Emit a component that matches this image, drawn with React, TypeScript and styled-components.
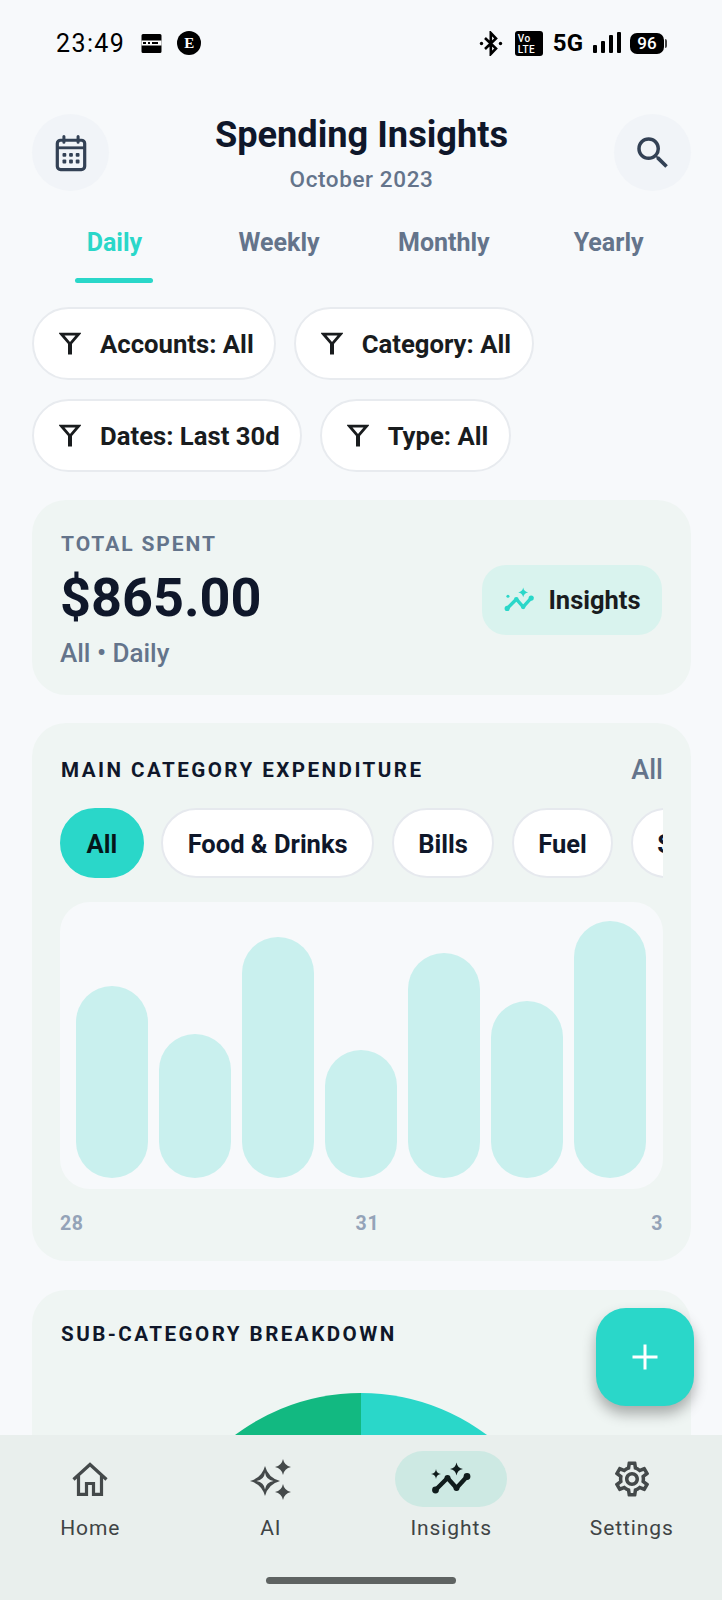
import React from "react";
import styled, { createGlobalStyle } from "styled-components";
import { MdSearch, MdOutlineSettings } from "react-icons/md";

const TEAL = "#2ad7c9";
const NAVY = "#0f172a";
const SLATE = "#64748b";

const Global = createGlobalStyle`
  html, body { margin: 0; padding: 0; background: #f7f9fb; }
  * { box-sizing: border-box; }
  body { font-family: Roboto, "Liberation Sans", sans-serif; }
`;

const Screen = styled.div`
  position: relative;
  width: 722px;
  height: 1600px;
  background: #f7f9fb;
  display: flex;
  flex-direction: column;
  overflow: hidden;
`;

const StatusBar = styled.div`
  height: 84px;
  flex: none;
  padding: 2px 55px 0 56px;
  display: flex;
  align-items: center;
  color: #000;
`;

const Time = styled.span`
  font-size: 25px;
  font-weight: 400;
  letter-spacing: 1.4px;
  margin-right: 16px;
`;

const EBadge = styled.span`
  width: 24px;
  height: 24px;
  margin-left: 15px;
  border-radius: 50%;
  background: #000;
  color: #fff;
  font: 700 15px "Liberation Serif", serif;
  display: flex;
  align-items: center;
  justify-content: center;
`;

const StatusRight = styled.div`
  margin-left: auto;
  display: flex;
  align-items: center;
`;

const VoLte = styled.span`
  width: 28px;
  height: 25px;
  margin-left: 12px;
  border-radius: 3px;
  background: #000;
  color: #fff;
  font-size: 10px;
  font-weight: 500;
  line-height: 11px;
  padding: 2px 0 0 3px;
  letter-spacing: 0.4px;
`;

const FiveG = styled.span`
  font-size: 24px;
  font-weight: 700;
  margin-left: 10px;
  margin-right: 10px;
`;

const Battery = styled.span`
  display: flex;
  align-items: center;
  margin-left: 9px;
  &::after {
    content: "";
    width: 2px;
    height: 9px;
    margin-left: 1px;
    background: #444;
    border-radius: 0 2px 2px 0;
  }
`;

const BatteryBody = styled.span`
  width: 34px;
  height: 21px;
  border-radius: 7px;
  background: #000;
  color: #fff;
  font-size: 17px;
  font-weight: 500;
  display: flex;
  align-items: center;
  justify-content: center;
`;

const Scroll = styled.div`
  flex: 1;
  min-height: 0;
  overflow: hidden;
  padding: 30px 31px 0 32px;
`;

const Header = styled.header`
  display: flex;
  align-items: center;
  justify-content: space-between;
`;

const RoundButton = styled.div`
  width: 77px;
  height: 77px;
  border-radius: 50%;
  background: #f1f4f8;
  color: #334155;
  display: flex;
  align-items: center;
  justify-content: center;
`;

const TitleBlock = styled.div`
  text-align: center;
`;

const Title = styled.h1`
  margin: 0;
  font-size: 36.2px;
  line-height: 42px;
  font-weight: 700;
  color: ${NAVY};
`;

const Subtitle = styled.div`
  margin-top: 12px;
  font-size: 22.5px;
  line-height: 23px;
  font-weight: 500;
  letter-spacing: 0.6px;
  color: ${SLATE};
`;

const Tabs = styled.nav`
  display: grid;
  grid-template-columns: repeat(4, 1fr);
  margin-top: 22px;
`;

const Tab = styled.div<{ $active?: boolean }>`
  height: 70px;
  padding-top: 14px;
  font-size: 25px;
  line-height: 32px;
  font-weight: 700;
  text-align: center;
  color: ${(p) => (p.$active ? TEAL : SLATE)};
  position: relative;
  &::after {
    content: "";
    display: ${(p) => (p.$active ? "block" : "none")};
    position: absolute;
    left: 43px;
    bottom: 0;
    width: 78px;
    height: 5px;
    border-radius: 3px;
    background: ${TEAL};
  }
`;

const FilterWrap = styled.div`
  display: flex;
  flex-wrap: wrap;
  gap: 19px 17.5px;
  margin-top: 24px;
`;

const FilterChip = styled.div`
  height: 73px;
  padding: 0 20.5px 0 25px;
  display: flex;
  align-items: center;
  gap: 19px;
  background: #fff;
  border: 2px solid #e8ebef;
  border-radius: 37px;
  font-size: 25.7px;
  font-weight: 700;
  color: #191c1e;
`;

const SummaryCard = styled.section`
  margin-top: 28px;
  height: 195px;
  padding: 30px 29px 0 28px;
  background: #eff5f3;
  border-radius: 34px;
  display: flex;
  align-items: flex-start;
  justify-content: space-between;
`;

const Label = styled.div`
  padding-left: 1px;
  font-size: 21px;
  line-height: 28px;
  font-weight: 700;
  letter-spacing: 1.9px;
  color: ${SLATE};
`;

const Amount = styled.div`
  margin-top: 8px;
  font-size: 54px;
  line-height: 64px;
  font-weight: 700;
  color: ${NAVY};
`;

const Meta = styled.div`
  margin-top: 8px;
  font-size: 26px;
  line-height: 30px;
  font-weight: 500;
  color: ${SLATE};
`;

const InsightsButton = styled.div`
  margin-top: 35px;
  width: 180px;
  height: 70px;
  border-radius: 24px;
  background: #d9f3ee;
  display: flex;
  align-items: center;
  justify-content: center;
  gap: 13px;
  font-size: 25.5px;
  font-weight: 700;
  color: #191c1e;
`;

const Card = styled.section`
  margin-top: 28px;
  padding: 30px 28px 0;
  background: #eff5f3;
  border-radius: 34px;
`;

const CardHead = styled.div`
  display: flex;
  align-items: center;
  justify-content: space-between;
  height: 34px;
`;

const CardTitle = styled.h2`
  margin: 0;
  padding-left: 1px;
  font-size: 20.6px;
  font-weight: 700;
  letter-spacing: 2.45px;
  color: ${NAVY};
`;

const CardAction = styled.span`
  font-size: 27px;
  font-weight: 500;
  color: ${SLATE};
`;

const PillRow = styled.div`
  display: flex;
  gap: 17.5px;
  margin-top: 21px;
  overflow: hidden;
`;

const Pill = styled.div<{ $active?: boolean }>`
  flex: none;
  height: 70px;
  padding: 2px 24.5px 0;
  display: flex;
  align-items: center;
  border-radius: 35px;
  font-size: 25.5px;
  font-weight: 700;
  background: ${(p) => (p.$active ? TEAL : "#fff")};
  border: 2px solid ${(p) => (p.$active ? TEAL : "#e6e9ee")};
  color: ${(p) => (p.$active ? "#05161a" : NAVY)};
`;

const ChartPanel = styled.div`
  margin-top: 24px;
  height: 287px;
  padding: 0 16px 11px;
  background: #f7f9fb;
  border-radius: 30px;
  display: flex;
  align-items: flex-end;
  gap: 11px;
`;

const Bar = styled.div`
  width: 72px;
  border-radius: 36px;
  background: #c9f0ee;
`;

const Axis = styled.div`
  display: flex;
  justify-content: space-between;
  margin-top: 24px;
  padding-bottom: 26px;
  font-size: 19.5px;
  line-height: 22px;
  font-weight: 700;
  letter-spacing: 0.6px;
  color: #94a3b8;
`;

const BreakdownCard = styled(Card)`
  margin-top: 29px;
  padding-top: 27px;
  height: 400px;
`;

const PieBox = styled.div`
  display: flex;
  justify-content: center;
  margin-top: 42px;
  padding-right: 2px;
`;

const BottomNav = styled.nav`
  flex: none;
  height: 165px;
  background: #e9efed;
  display: grid;
  grid-template-columns: repeat(4, 1fr);
  padding-top: 16px;
  position: relative;
`;

const NavItem = styled.div`
  display: flex;
  flex-direction: column;
  align-items: center;
  font-size: 21px;
  line-height: 26px;
  letter-spacing: 0.9px;
  font-weight: 400;
  color: #3f4445;
`;

const NavIcon = styled.div<{ $active?: boolean }>`
  width: 112px;
  height: 56px;
  margin-bottom: 8px;
  border-radius: 28px;
  background: ${(p) => (p.$active ? "#cde9e3" : "transparent")};
  display: flex;
  align-items: center;
  justify-content: center;
`;

const HomeBar = styled.div`
  position: absolute;
  left: 266px;
  bottom: 16px;
  width: 190px;
  height: 7px;
  border-radius: 4px;
  background: #5e6362;
`;

const Fab = styled.div`
  position: absolute;
  left: 596px;
  top: 1308px;
  width: 98px;
  height: 98px;
  border-radius: 30px;
  background: ${TEAL};
  box-shadow: 0 8px 14px rgba(0, 0, 0, 0.3);
  display: flex;
  align-items: center;
  justify-content: center;
`;

const Sparkle = ({ x, y, r, w = 0.3 }: { x: number; y: number; r: number; w?: number }) => {
  const k = r * w;
  return (
    <path
      d={`M${x} ${y - r}Q${x + k * 0.3} ${y - k * 0.3} ${x + r} ${y}Q${x + k * 0.3} ${y + k * 0.3} ${x} ${y + r}Q${x - k * 0.3} ${y + k * 0.3} ${x - r} ${y}Q${x - k * 0.3} ${y - k * 0.3} ${x} ${y - r}Z`}
    />
  );
};

const CalendarIcon = () => (
  <svg width="34" height="38" viewBox="0 0 36 40" fill="none">
    <rect x="3.5" y="6.5" width="29" height="31" rx="3.5" stroke="currentColor" strokeWidth="3.4" />
    <path d="M3 14.5h30" stroke="currentColor" strokeWidth="3" />
    <path d="M10.5 2.5v6M25.5 2.5v6" stroke="currentColor" strokeWidth="3.2" strokeLinecap="round" />
    <g fill="currentColor">
      <rect x="9" y="20" width="4" height="4" rx="1" />
      <rect x="16" y="20" width="4" height="4" rx="1" />
      <rect x="23" y="20" width="4" height="4" rx="1" />
      <rect x="9" y="27" width="4" height="4" rx="1" />
      <rect x="16" y="27" width="4" height="4" rx="1" />
      <rect x="23" y="27" width="4" height="4" rx="1" />
    </g>
  </svg>
);

const FunnelIcon = () => (
  <svg width="22" height="23" viewBox="0 0 22 23" fill="none" stroke="#191c1e" strokeLinejoin="miter">
    <path d="M2.5 2.2h17L11 12.2z" strokeWidth="2.8" />
    <path d="M11 11v11.5" strokeWidth="4" />
  </svg>
);

const InsightsGlyph = ({ size, color, dot }: { size: number; color: string; dot?: boolean }) => (
  <svg width={size} height={size} viewBox="0 0 42 42" fill="none">
    <path d="M5 32.5 17.5 20l9 10L37.5 18" stroke={color} strokeWidth="4.4" strokeLinecap="round" strokeLinejoin="round" />
    <circle cx="5.5" cy="32" r="3.4" fill={color} />
    <circle cx="17.5" cy="20" r="3" fill={color} />
    <circle cx="26.5" cy="30" r="3" fill={color} />
    <circle cx="37" cy="18.5" r="3.4" fill={color} />
    <g fill={color}>
      <Sparkle x={26.5} y={11} r={6.5} w={0.5} />
      {dot ? <circle cx="6.5" cy="16" r="2" /> : <Sparkle x={6} y={16} r={5} w={0.3} />}
    </g>
  </svg>
);

const HomeIcon = () => (
  <svg width="38" height="34" viewBox="0 0 38 34" fill="none" stroke="#44494a" strokeWidth="3.2">
    <path d="M2.5 17.5 19 2.5l16.5 15" strokeLinejoin="miter" />
    <path d="M7.5 14v18.4h8V21.5h7v10.9h8V14" />
  </svg>
);

const AiIcon = () => (
  <svg width="42" height="42" viewBox="0 0 42 42">
    <g fill="#44494a">
      <Sparkle x={15} y={23} r={15} w={0.7} />
      <Sparkle x={33} y={9} r={8} w={0.55} />
      <Sparkle x={33} y={34} r={8} w={0.55} />
    </g>
    <path d="M15 14.5Q16 22 23.5 23Q16 24 15 31.5Q14 24 6.5 23Q14 22 15 14.5Z" fill="#e9efed" />
  </svg>
);

const CardGlyph = () => (
  <svg width="21" height="21" viewBox="0 0 21 21">
    <path d="M2 1h17a1.5 1.5 0 0 1 1.5 1.5v16a1.5 1.5 0 0 1-1.5 1.5H2A1.5 1.5 0 0 1 .5 18.5v-16A1.5 1.5 0 0 1 2 1z" fill="#000" />
    <rect x="0.5" y="7.5" width="20" height="5" fill="#fff" />
    <path d="M2 9h3v2H2zM7 9h2v2H7zM11 9h6v2h-6z" fill="#000" />
  </svg>
);

const BluetoothGlyph = () => (
  <svg width="24" height="25" viewBox="0 0 24 25" fill="none">
    <path d="M6 7l11 10.5-5.2 5.5V2l5.2 5.5L6 18" stroke="#000" strokeWidth="2.6" />
    <circle cx="2.5" cy="12.5" r="1.7" fill="#000" />
    <circle cx="21.5" cy="12.5" r="1.7" fill="#000" />
  </svg>
);

const SignalGlyph = () => (
  <svg width="28" height="22" viewBox="0 0 28 22" fill="#000">
    <rect x="0" y="13" width="4" height="8" rx="1" />
    <rect x="8" y="9" width="4" height="12" rx="1" />
    <rect x="16" y="3" width="4" height="18" rx="1" />
    <rect x="24" y="0" width="4" height="21" rx="1" />
  </svg>
);

const bars = [192, 144, 241, 128, 225, 177, 257];

export default function App() {
  return (
    <Screen>
      <Global />
      <StatusBar>
        <Time>23:49</Time>
        <CardGlyph />
        <EBadge>E</EBadge>
        <StatusRight>
          <BluetoothGlyph />
          <VoLte>
            Vo
            <br />
            LTE
          </VoLte>
          <FiveG>5G</FiveG>
          <SignalGlyph />
          <Battery>
            <BatteryBody>96</BatteryBody>
          </Battery>
        </StatusRight>
      </StatusBar>

      <Scroll>
        <Header>
          <RoundButton>
            <CalendarIcon />
          </RoundButton>
          <TitleBlock>
            <Title>Spending Insights</Title>
            <Subtitle>October 2023</Subtitle>
          </TitleBlock>
          <RoundButton>
            <MdSearch size={42} />
          </RoundButton>
        </Header>

        <Tabs>
          <Tab $active>Daily</Tab>
          <Tab>Weekly</Tab>
          <Tab>Monthly</Tab>
          <Tab>Yearly</Tab>
        </Tabs>

        <FilterWrap>
          {["Accounts: All", "Category: All", "Dates: Last 30d", "Type: All"].map((t) => (
            <FilterChip key={t}>
              <FunnelIcon />
              {t}
            </FilterChip>
          ))}
        </FilterWrap>

        <SummaryCard>
          <div>
            <Label>TOTAL SPENT</Label>
            <Amount>$865.00</Amount>
            <Meta>All • Daily</Meta>
          </div>
          <InsightsButton>
            <InsightsGlyph size={32} color={TEAL} dot />
            Insights
          </InsightsButton>
        </SummaryCard>

        <Card>
          <CardHead>
            <CardTitle>MAIN CATEGORY EXPENDITURE</CardTitle>
            <CardAction>All</CardAction>
          </CardHead>
          <PillRow>
            <Pill $active>All</Pill>
            <Pill>Food &amp; Drinks</Pill>
            <Pill>Bills</Pill>
            <Pill>Fuel</Pill>
            <Pill>Shopping</Pill>
          </PillRow>
          <ChartPanel>
            {bars.map((h, i) => (
              <Bar key={i} style={{ height: h }} />
            ))}
          </ChartPanel>
          <Axis>
            <span>28</span>
            <span>31</span>
            <span>3</span>
          </Axis>
        </Card>

        <BreakdownCard>
          <CardHead>
            <CardTitle>SUB-CATEGORY BREAKDOWN</CardTitle>
          </CardHead>
          <PieBox>
            <svg width="420" height="420" viewBox="0 0 420 420">
              <path d="M210 210V0A210 210 0 0 0 0 210Z" fill="#12b981" />
              <path d="M210 210V0A210 210 0 0 1 420 210Z" fill={TEAL} />
            </svg>
          </PieBox>
        </BreakdownCard>
      </Scroll>

      <BottomNav>
        <NavItem>
          <NavIcon>
            <HomeIcon />
          </NavIcon>
          Home
        </NavItem>
        <NavItem>
          <NavIcon>
            <AiIcon />
          </NavIcon>
          AI
        </NavItem>
        <NavItem>
          <NavIcon $active>
            <InsightsGlyph size={42} color="#101c1c" />
          </NavIcon>
          Insights
        </NavItem>
        <NavItem>
          <NavIcon>
            <MdOutlineSettings size={42} color="#44494a" />
          </NavIcon>
          Settings
        </NavItem>
        <HomeBar />
      </BottomNav>

      <Fab>
        <svg width="28" height="28" viewBox="0 0 28 28" stroke="#fff" strokeWidth="3">
          <path d="M14 1.5v25M1.5 14h25" />
        </svg>
      </Fab>
    </Screen>
  );
}
